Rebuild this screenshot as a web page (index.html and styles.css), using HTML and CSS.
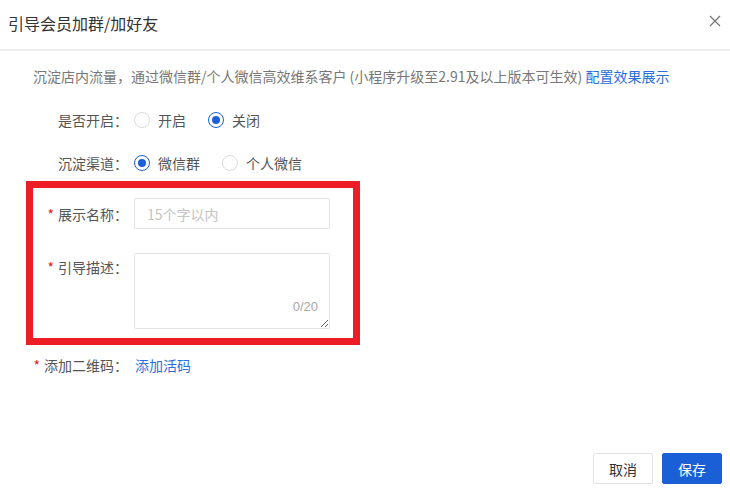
FILE: index.html
```html
<!DOCTYPE html>
<html>
<head>
    <title>引导会员加群/加好友</title>
    <link rel="stylesheet" href="styles.css">
</head>
<body>
    <div class="dialog">
        <div class="dialog-header">
            <span class="dialog-title">引导会员加群/加好友</span>
            <svg class="close-icon" viewBox="0 0 12 12" width="12" height="12">
                <path d="M1,1 L11,11 M11,1 L1,11" stroke="#777" stroke-width="1.3" fill="none"/>
            </svg>
        </div>
        <div class="dialog-body">
            <p class="desc">沉淀店内流量，通过微信群/个人微信高效维系客户 (小程序升级至2.91及以上版本可生效) <a class="link">配置效果展示</a></p>

            <div class="form-row first">
                <label class="form-label">是否开启：</label>
                <div class="radio-group">
                    <span class="radio"><i class="radio-dot"></i>开启</span>
                    <span class="radio checked"><i class="radio-dot"></i>关闭</span>
                </div>
            </div>
            <div class="form-row">
                <label class="form-label">沉淀渠道：</label>
                <div class="radio-group">
                    <span class="radio checked"><i class="radio-dot"></i>微信群</span>
                    <span class="radio"><i class="radio-dot"></i>个人微信</span>
                </div>
            </div>

            <div class="highlight">
                <div class="form-row field">
                    <label class="form-label"><em>*</em>展示名称：</label>
                    <input class="text-input" type="text" placeholder="15个字以内">
                </div>
                <div class="form-row field top">
                    <label class="form-label"><em>*</em>引导描述：</label>
                    <div class="textarea-wrap">
                        <textarea class="text-area"></textarea>
                        <span class="count">0/20</span>
                    </div>
                </div>
            </div>

            <div class="form-row qr">
                <label class="form-label"><em>*</em>添加二维码：</label>
                <a class="link">添加活码</a>
            </div>
        </div>
        <div class="dialog-footer">
            <button class="btn">取消</button>
            <button class="btn btn-primary">保存</button>
        </div>
    </div>
</body>
</html>
```

FILE: styles.css
```css
body {
    margin: 0;
    font-family: "Noto Sans CJK SC", "Liberation Sans", sans-serif;
    font-size: 14px;
    color: #555;
    background-color: #fff;
}
.dialog {
    width: 730px;
    height: 495px;
    display: flex;
    flex-direction: column;
}
.dialog-header {
    height: 51px;
    padding: 0 9px 0 8px;
    display: flex;
    align-items: center;
    justify-content: space-between;
    border-bottom: 2px solid #eeeeee;
    box-sizing: border-box;
}
.dialog-title {
    font-size: 16px;
    color: #333;
    margin-top: -3px;
}
.close-icon {
    margin-top: -8px;
}
.dialog-body {
    padding: 0 0 0 33px;
}
.desc {
    margin: 15px 0 0;
    line-height: 20px;
    color: #777;
}
.link {
    color: #2b6fdc;
    cursor: pointer;
}
.form-row {
    display: flex;
    align-items: center;
    line-height: 20px;
    margin-top: 23px;
}
.form-row.first {
    margin-top: 24px;
}
.form-label {
    width: 95px;
    text-align: right;
    margin-right: 6px;
    white-space: nowrap;
}
.form-label em {
    font-style: normal;
    color: #e02020;
    margin-right: 4px;
}
.radio-group {
    display: flex;
    gap: 22px;
}
.radio {
    display: flex;
    align-items: center;
    color: #555;
}
.radio-dot {
    width: 16px;
    height: 16px;
    border: 1px solid #dcdcdc;
    border-radius: 50%;
    box-sizing: border-box;
    margin-right: 8px;
    display: flex;
    align-items: center;
    justify-content: center;
}
.radio.checked .radio-dot {
    border-color: #1b5fd7;
}
.radio.checked .radio-dot::after {
    content: "";
    width: 8px;
    height: 8px;
    border-radius: 50%;
    background-color: #1b5fd7;
}
.highlight {
    width: 320px;
    margin: 8px 0 0 -7px;
    border: 7px solid #ee1c25;
    padding: 10px 0 9px 0;
}
.form-row.field {
    margin-top: 0;
}
.form-row.field.top {
    margin-top: 24px;
    align-items: flex-start;
}
.form-row.field.top .form-label {
    line-height: 29px;
}
.text-input {
    width: 196px;
    height: 31px;
    box-sizing: border-box;
    border: 1px solid #e3e3e3;
    border-radius: 2px;
    padding: 0 12px;
    font-family: inherit;
    font-size: 14px;
    color: #333;
    outline: none;
}
.text-input::placeholder {
    color: #c4c4c4;
}
.textarea-wrap {
    position: relative;
    width: 196px;
    height: 76px;
}
.text-area {
    width: 196px;
    height: 76px;
    box-sizing: border-box;
    border: 1px solid #e3e3e3;
    border-radius: 2px;
    margin: 0;
    display: block;
    font-family: inherit;
    outline: none;
}
.count {
    position: absolute;
    right: 12px;
    bottom: 14px;
    font-family: "Liberation Sans", sans-serif;
    font-size: 13px;
    line-height: 16px;
    color: #a8a8a8;
}
.form-row.qr {
    margin-top: 10px;
    margin-left: -13px;
}
.form-row.qr .form-label {
    width: 108px;
    margin-right: 7px;
}
.dialog-footer {
    margin-top: auto;
    padding: 0 8px 11px;
    display: flex;
    justify-content: flex-end;
    gap: 9px;
}
.btn {
    width: 60px;
    height: 31px;
    border: 1px solid #e3e3e3;
    border-radius: 2px;
    background-color: #fff;
    color: #333;
    font-family: inherit;
    font-size: 14px;
    cursor: pointer;
}
.btn-primary {
    background-color: #1b5fd7;
    border-color: #1b5fd7;
    color: #fff;
}
```
